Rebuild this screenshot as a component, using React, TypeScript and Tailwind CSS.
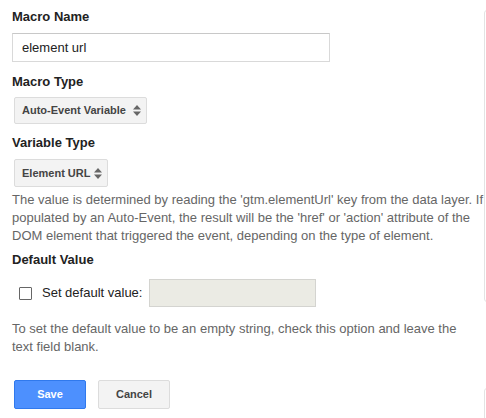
import React from "react";

const font = { fontFamily: '"Liberation Sans", Arial, sans-serif' };

function Arrows() {
  return (
    <svg width="8" height="11" viewBox="0 0 8 11" className="shrink-0">
      <path d="M4 0 L8 4.5 L0 4.5 Z" fill="#666" />
      <path d="M0 6.5 L8 6.5 L4 11 Z" fill="#666" />
    </svg>
  );
}

function SelectBox({ label, w, h }: { label: string; w: string; h: string }) {
  return (
    <div
      className={`ml-[2px] flex items-center justify-between pl-[7px] pr-[5px] bg-[#f3f3f3] border border-[#dcdcdc] rounded-[2px] text-[11px] font-bold text-[#444] ${w} ${h}`}
    >
      <span>{label}</span>
      <Arrows />
    </div>
  );
}

export default function App() {
  return (
    <div
      className="w-[486px] h-[418px] bg-white overflow-hidden flex"
      style={font}
    >
      <div className="w-[484px] shrink-0 pl-[12px] flex flex-col">
        <div className="mt-[9px] text-[13px] leading-[16px] font-bold text-[#222]">
          Macro Name
        </div>
        <div className="mt-[8px] w-[318px] h-[29px] border border-[#d9d9d9] border-t-[#c8c8c8] flex items-center pl-[9px] text-[13px] text-[#222]">
          element url
        </div>
        <div className="mt-[12px] text-[13px] leading-[16px] font-bold text-[#222]">
          Macro Type
        </div>
        <div className="mt-[7px]">
          <SelectBox label="Auto-Event Variable" w="w-[133px]" h="h-[27px]" />
        </div>
        <div className="mt-[11px] text-[13px] leading-[16px] font-bold text-[#222]">
          Variable Type
        </div>
        <div className="mt-[8px]">
          <SelectBox label="Element URL" w="w-[94px]" h="h-[28px]" />
        </div>
        <div className="mt-[4px] text-[13px] leading-[18px] text-[#666] whitespace-nowrap">
          The value is determined by reading the 'gtm.elementUrl' key from the data layer. If
          <br />
          populated by an Auto-Event, the result will be the 'href' or 'action' attribute of the
          <br />
          DOM element that triggered the event, depending on the type of element.
        </div>
        <div className="mt-[7px] text-[13px] leading-[16px] font-bold text-[#222]">
          Default Value
        </div>
        <div className="mt-[11px] h-[28px] flex items-center">
          <div className="ml-[7px] w-[13px] h-[13px] border border-[#666] rounded-[1px] bg-white shrink-0" />
          <span className="ml-[10px] text-[13px] text-[#222]">Set default value:</span>
          <div className="ml-[7px] w-[167px] h-[28px] bg-[#ebebe4] border border-[#d4d4d0]" />
        </div>
        <div className="mt-[13px] text-[13px] leading-[18px] text-[#666] whitespace-nowrap">
          To set the default value to be an empty string, check this option and leave the
          <br />
          text field blank.
        </div>
        <div className="mt-[24px] ml-[2px] flex gap-[12px]">
          <div className="w-[72px] h-[29px] bg-[#4d90fe] border border-[#3079ed] rounded-[2px] flex items-center justify-center text-[11px] font-bold text-white">
            Save
          </div>
          <div className="w-[72px] h-[29px] bg-[#f3f3f3] border border-[#dcdcdc] rounded-[2px] flex items-center justify-center text-[11px] font-bold text-[#444]">
            Cancel
          </div>
        </div>
      </div>
      <div className="w-[200px] shrink-0 flex flex-col pt-[10px] gap-[86px]">
        <div className="h-[292px] shrink-0 border border-[#e3e3e3] rounded-[3px]" />
        <div className="h-[100px] shrink-0 border border-[#e3e3e3] rounded-[3px]" />
      </div>
    </div>
  );
}
